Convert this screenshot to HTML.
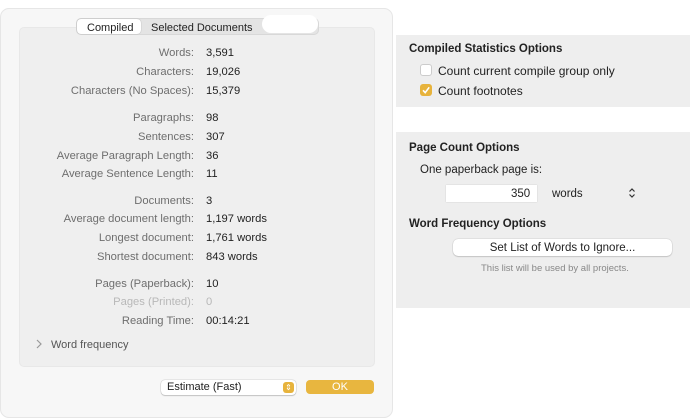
<!DOCTYPE html>
<html><head><meta charset="utf-8"><style>
*{margin:0;padding:0;box-sizing:border-box}
body{width:690px;height:407px;background:#fff;position:relative;overflow:hidden;font-family:"Liberation Sans",sans-serif;font-size:11px;color:#222}
.a{position:absolute;white-space:nowrap}
.t{margin-top:2px}
.win{position:absolute;left:0;top:8px;width:393px;height:410px;background:#f7f7f7;border-radius:9px;border:1px solid #e6e6e6}
.box{position:absolute;left:19px;top:27px;width:356px;height:340px;background:#efefef;border-radius:5px;border:1px solid #e8e8e8}
.l{position:absolute;right:496px;color:#6e6e6e;text-align:right;white-space:nowrap;margin-top:2px;font-size:11.2px}
.v{position:absolute;left:206px;color:#222;white-space:nowrap;margin-top:2px;font-size:11.2px}
.g{color:#b8b8b8}
.rp{position:absolute;left:396px;width:294px;background:#eeeeee}
.b{font-weight:bold;font-size:11.5px;color:#222}
</style></head><body>
<div class="win"></div>
<div class="box"></div>
<div class="a" style="left:76px;top:18px;width:243px;height:17px;background:#e4e4e4;border-radius:5px;border:1px solid #d8d8d8"></div>
<div class="a" style="left:77px;top:19px;width:64px;height:15px;background:#fff;border-radius:4px;box-shadow:0 0 1px #999"></div>
<div class="a t" style="left:87px;top:20px">Compiled</div>
<div class="a t" style="left:151px;top:20px">Selected Documents</div>
<div class="a" style="left:262px;top:15px;width:56px;height:18px;background:#fff;border-radius:9px"></div>

<div class="l" style="top:45px">Words:</div><div class="v" style="top:45px">3,591</div>
<div class="l" style="top:64px">Characters:</div><div class="v" style="top:64px">19,026</div>
<div class="l" style="top:83px">Characters (No Spaces):</div><div class="v" style="top:83px">15,379</div>
<div class="l" style="top:110px">Paragraphs:</div><div class="v" style="top:110px">98</div>
<div class="l" style="top:129px">Sentences:</div><div class="v" style="top:129px">307</div>
<div class="l" style="top:148px">Average Paragraph Length:</div><div class="v" style="top:148px">36</div>
<div class="l" style="top:166px">Average Sentence Length:</div><div class="v" style="top:166px">11</div>
<div class="l" style="top:193px">Documents:</div><div class="v" style="top:193px">3</div>
<div class="l" style="top:211px">Average document length:</div><div class="v" style="top:211px">1,197 words</div>
<div class="l" style="top:230px">Longest document:</div><div class="v" style="top:230px">1,761 words</div>
<div class="l" style="top:249px">Shortest document:</div><div class="v" style="top:249px">843 words</div>
<div class="l" style="top:276px">Pages (Paperback):</div><div class="v" style="top:276px">10</div>
<div class="l g" style="top:294px">Pages (Printed):</div><div class="v g" style="top:294px">0</div>
<div class="l" style="top:313px">Reading Time:</div><div class="v" style="top:313px">00:14:21</div>
<div class="a" style="left:36px;top:339px"><svg width="6" height="10"><path d="M1 1 L5 5 L1 9" stroke="#999" stroke-width="1.2" fill="none"/></svg></div>
<div class="a t" style="left:51px;top:337px;color:#555">Word frequency</div>

<div class="a" style="left:161px;top:380px;width:135px;height:15px;background:#fff;border-radius:4px;box-shadow:0 0 1px #888,0 1px 1px #ccc"></div>
<div class="a" style="left:167px;top:381px">Estimate (Fast)</div>
<div class="a" style="left:283px;top:382px;width:11px;height:11px;background:#e7b33c;border-radius:3px;color:#fff;font-size:8px;line-height:11px;text-align:center">&#8661;</div>
<div class="a" style="left:306px;top:380px;width:68px;height:14px;background:#e8b63f;border-radius:4px;color:#fff;text-align:center;line-height:14px">OK</div>

<div class="rp" style="top:35px;height:72px"></div>
<div class="a b t" style="left:409px;top:41px">Compiled Statistics Options</div>
<div class="a" style="left:420px;top:64px;width:12px;height:12px;background:#fff;border:1px solid #ccc;border-radius:3px"></div>
<div class="a t" style="left:438px;top:62px;font-size:12px">Count current compile group only</div>
<div class="a" style="left:420px;top:84px;width:12px;height:12px;background:#e7b33c;border-radius:3px"><svg width="12" height="12"><path d="M3 6.3 L5.2 8.6 L9.2 3.3" stroke="#fff" stroke-width="1.6" fill="none"/></svg></div>
<div class="a t" style="left:438px;top:82px;font-size:12px">Count footnotes</div>

<div class="rp" style="top:132px;height:176px"></div>
<div class="a b t" style="left:409px;top:140px">Page Count Options</div>
<div class="a t" style="left:420px;top:162px;font-size:11.5px">One paperback page is:</div>
<div class="a" style="left:446px;top:185px;width:91px;height:17px;background:#fff;box-shadow:0 0 1px #bbb"></div>
<div class="a t" style="left:511px;top:186px;font-size:11.5px">350</div>
<div class="a t" style="left:552px;top:186px;font-size:11.5px">words</div>
<div class="a" style="left:628px;top:187px"><svg width="8" height="12"><path d="M1.5 4.5 L4 2 L6.5 4.5 M1.5 7.5 L4 10 L6.5 7.5" stroke="#333" stroke-width="1.2" fill="none"/></svg></div>
<div class="a b t" style="left:409px;top:216px">Word Frequency Options</div>
<div class="a" style="left:453px;top:239px;width:219px;height:17px;background:#fff;border-radius:5px;box-shadow:0 0 1px #999,0 1px 1px #ccc;text-align:center;line-height:19px;font-size:11.5px">Set List of Words to Ignore...</div>
<div class="a t" style="left:481px;top:261px;font-size:9.5px;color:#888">This list will be used by all projects.</div>
</body></html>
